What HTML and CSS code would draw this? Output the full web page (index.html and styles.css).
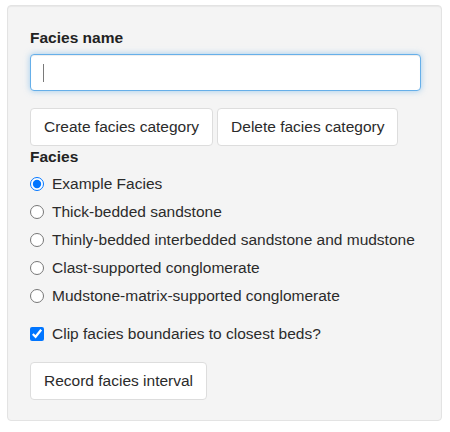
FILE: index.html
```html
<!DOCTYPE html>
<html>
<head>
<meta charset="utf-8">
<link rel="stylesheet" href="styles.css">
</head>
<body>
<div class="well">
  <div class="group">
    <label class="ctl-label" for="fname">Facies name</label>
    <div class="input-wrap">
      <input id="fname" class="text-input" type="text" value="">
      <span class="caret"></span>
    </div>
  </div>
  <div class="btn-row">
    <button class="btn">Create facies category</button>
    <button class="btn">Delete facies category</button>
  </div>
  <div class="radio-group">
    <div class="ctl-label facies-label">Facies</div>
    <label class="opt"><input type="radio" name="f" checked><span>Example Facies</span></label>
    <label class="opt"><input type="radio" name="f"><span>Thick-bedded sandstone</span></label>
    <label class="opt"><input type="radio" name="f"><span>Thinly-bedded interbedded sandstone and mudstone</span></label>
    <label class="opt"><input type="radio" name="f"><span>Clast-supported conglomerate</span></label>
    <label class="opt"><input type="radio" name="f"><span>Mudstone-matrix-supported conglomerate</span></label>
  </div>
  <label class="opt check"><input type="checkbox" checked><span>Clip facies boundaries to closest beds?</span></label>
  <div class="record-row">
    <button class="btn">Record facies interval</button>
  </div>
</div>
</body>
</html>
```
FILE: styles.css
```css
html, body {
  margin: 0;
  padding: 0;
  background: #ffffff;
}
body {
  padding: 5px 8px 0 7px;
  font-family: "Liberation Sans", Arial, sans-serif;
  font-size: 15.5px;
  color: #2b2b2b;
}
.well {
  box-sizing: border-box;
  width: 435px;
  height: 416px;
  background: #f4f4f4;
  border: 1px solid #e3e3e3;
  border-radius: 4px;
  box-shadow: inset 0 1px 1px rgba(0,0,0,0.05);
  padding: 21px 22px 0 22px;
}
.group {
  display: flex;
  flex-direction: column;
}
.ctl-label {
  font-weight: bold;
  line-height: 22px;
  color: #222;
}
.input-wrap {
  position: relative;
  margin-top: 5px;
  width: 391px;
  height: 37px;
}
.text-input {
  box-sizing: border-box;
  width: 391px;
  height: 37px;
  border: 1px solid #66afe9;
  border-radius: 4px;
  background: #fff;
  box-shadow: inset 0 1px 1px rgba(0,0,0,.075), 0 0 6px rgba(102,175,233,.6);
  outline: none;
  padding: 6px 13px;
  font: inherit;
  margin: 0;
}
.caret {
  position: absolute;
  left: 13px;
  top: 10px;
  width: 1px;
  height: 18px;
  background: #7a7a7a;
}
.btn-row {
  display: flex;
  gap: 4px;
  margin-top: 17px;
}
.btn {
  box-sizing: border-box;
  height: 38px;
  padding: 0 13px;
  background: #fff;
  border: 1px solid #dddddd;
  border-radius: 4px;
  font: inherit;
  color: #2b2b2b;
  line-height: 36px;
}
.radio-group {
  display: flex;
  flex-direction: column;
  margin-top: 0;
}
.facies-label {
  line-height: 22px;
  margin-bottom: 2px;
}
.opt {
  display: flex;
  align-items: center;
  height: 28px;
  line-height: 22px;
}
.opt input {
  width: 14px;
  height: 14px;
  margin: 0 8px 0 0;
  accent-color: #0075ff;
}
.check {
  margin-top: 10px;
}
.record-row {
  margin-top: 14px;
}
```
